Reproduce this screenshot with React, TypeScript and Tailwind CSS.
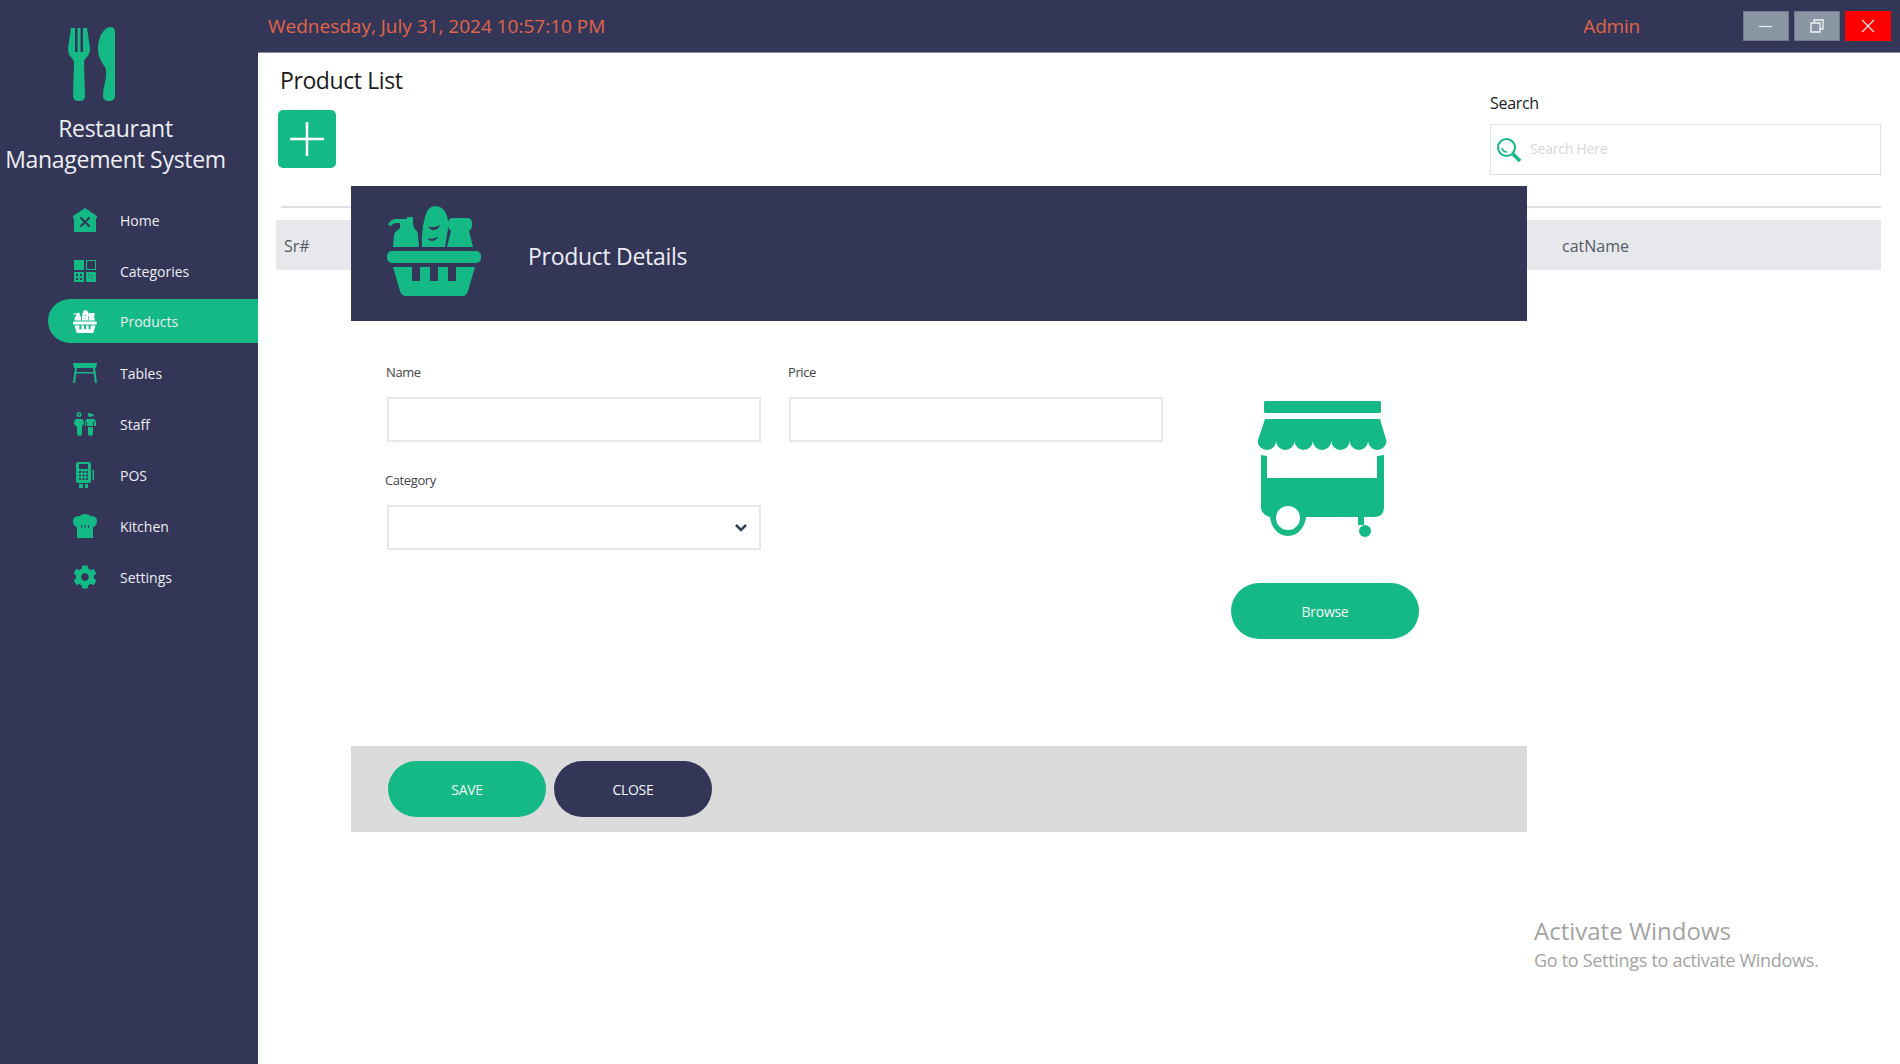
import { FaCog } from 'react-icons/fa'

const navy = '#343658'

function Logo() {
  return (
    <svg viewBox="0 0 48 74" className="w-[48px] h-[74px]" fill="#14b985">
      <path d="M3 1h4v24h2.500V1h3v24H15V1h4l3 20q0 7-4 10l-1.500 2q-.5 1-.5 3l1 33q0 5-5.500 5h-.5Q5 74 5 69l1-33q0-2-.7-3L3 30Q0 28 0 21z" />
      <path d="M42 0q5 0 5 5v64q0 5-6 5t-6-5q0-6 2-14 2-9 .5-14C33 34 30 30 30 21 30 9 37 0 42 0z" />
    </svg>
  )
}

function Basket({ className, cut = navy }: { className: string; cut?: string }) {
  return (
    <svg viewBox="0 0 94 90" className={className} fill="currentColor">
      <path d="M6 41l1-11q0-4 4-6l2-2v-5H9q-3 0-5 3l-3-1q2-6 8-6h11v-2h6v5q0 6 3 8 2 2 2 6l1 11z" />
      <path d="M35 41q-1-15 3-30 3-11 10-11 9 0 12 10 2 6 1 13l-3 18z" />
      <path d="M60 41l4-16q-3-2-3-5v-3q0-5 5-5h14q5 0 5 5v3q0 3-3 5l4 16z" />
      <path d="M41 20q4 3 12-1-2 5-7 5-3 0-5-4zM40 32q4 2 11-1-2 4-6 4-3 0-5-3z" fill={cut} />
      <rect x="0" y="45" width="94" height="12" rx="5" />
      <path
        fillRule="evenodd"
        d="M6 61h82l-7 24q-1.500 5-6 5H19q-4.500 0-6-5zM25 61v14h8V61zM43 61v14h8V61zM61 61v14h8V61z"
      />
    </svg>
  )
}

function Cart() {
  return (
    <svg viewBox="0 0 129 136" className="w-[129px] h-[136px]" fill="#14b985">
      <rect x="6" y="0" width="117" height="12" rx="1.500" />
      <path d="M7 18h115l6.500 22a9.200 9 0 0 1-18.400 0 9.200 9 0 0 1-18.400 0 9.200 9 0 0 1-18.400 0 9.200 9 0 0 1-18.400 0 9.200 9 0 0 1-18.400 0 9.200 9 0 0 1-18.400 0 9.200 9 0 0 1-18.400 0z" />
      <path d="M3 54l6 1v22h110V55l7-1v52q0 10-10 10h-10v8h-6v-8H48c-1 10-8 19-18 19s-17-9-18-19c-5-1-9-5-9-10z" />
      <circle cx="30" cy="117" r="12" fill="#fff" />
      <circle cx="107" cy="130" r="6" />
    </svg>
  )
}

function HomeIcon() {
  return (
    <svg viewBox="0 0 24 24" className="w-[24px] h-[24px]">
      <path d="M12 0l12 8v2h-1v14H1V10H0V8z" fill="#14b985" />
      <path d="M8 10l8 8M16 10l-8 8" stroke={navy} strokeWidth="2" strokeLinecap="round" />
    </svg>
  )
}

function GridIcon() {
  return (
    <svg viewBox="0 0 22 22" className="w-[22px] h-[22px]" fill="#14b985">
      <rect x="0" y="0" width="10" height="10" />
      <path fillRule="evenodd" d="M12 0h10v10H12zM13 1v8h8V1z" />
      <path fillRule="evenodd" d="M0 12h10v10H0zM2 14v2h2v-2zM6 14v2h2v-2zM2 18v2h2v-2zM6 18v2h2v-2z" />
      <path fillRule="evenodd" d="M12 12h10v10H12zM14 14v1h1v-1zM17 15v1h1v-1zM15 17v1h1v-1zM18 18v1h1v-1z" />
    </svg>
  )
}

function TableIcon() {
  return (
    <svg viewBox="0 0 24 20" className="w-[24px] h-[20px]" fill="#14b985">
      <path d="M0 0h24l-1 5H1z" />
      <path d="M2 5h2L2 20H0zM20 5h2l2 15h-2zM3 9h18v1.500H3z" />
    </svg>
  )
}

function StaffIcon() {
  return (
    <svg viewBox="0 0 22 24" className="w-[22px] h-[24px]" fill="#14b985">
      <path fillRule="evenodd" d="M5 0a2.500 2.500 0 1 1 0 5 2.500 2.500 0 0 1 0-5zM5 1.500a1 1 0 1 0 0 2 1 1 0 0 0 0-2z" />
      <path d="M2 7h6q2 1 2 5l-2 2v8q0 2-2.500 2T3 22v-7l-3-3q0-4 2-5z" />
      <path d="M14 1l5 1 1 2-5 1q-2-2-1-4zM13 7h7q2 1 2 4v3h-2v-4h-1v4h-6v-4h-1v4h-1v-3q0-3 2-4zM14 15h5v7q0 2-2.500 2T14 22z" />
    </svg>
  )
}

function PosIcon() {
  return (
    <svg viewBox="0 0 18 26" className="w-[18px] h-[26px]" fill="#14b985">
      <path fillRule="evenodd" d="M2 0h11q2 0 2 2v17q0 2-2 2H2q-2 0-2-2V2q0-2 2-2zM3 2v5h9V2zM3 9v2h2V9zM6.500 9v2h2V9zM10 9v2h2V9zM3 12.500v2h2v-2zM6.500 12.500v2h2v-2zM10 12.500v2h2v-2zM3 16v2h2v-2zM6.500 16v2h2v-2zM10 16v2h2v-2z" />
      <path d="M16.500 8H18v10h-1.500zM3 22h4v4H3zM9 22h3v4H9z" />
    </svg>
  )
}

function ChefIcon() {
  return (
    <svg viewBox="0 0 24 24" className="w-[24px] h-[24px]" fill="#14b985">
      <path d="M12 0q4 0 5 2 7 0 7 5 0 5-4 6v11H4V13Q0 12 0 7q0-5 7-5 1-2 5-2z" />
      <path d="M8 11h1v3H8zM11.500 11h1v3h-1zM15 11h1v3h-1z" fill={navy} />
    </svg>
  )
}

function SearchIcon() {
  return (
    <svg viewBox="0 0 26 26" className="w-[26px] h-[26px]" fill="none" stroke="#14b985">
      <circle cx="10.500" cy="10.500" r="8.500" strokeWidth="2" />
      <path d="M6 11q1 4 5 4" strokeWidth="1.500" />
      <path d="M17 17l7 7" strokeWidth="3.500" />
    </svg>
  )
}

const items = [
  { label: 'Home', icon: <HomeIcon /> },
  { label: 'Categories', icon: <GridIcon /> },
  { label: 'Products', icon: <Basket className="w-[24px] h-[23px] text-white" cut="#14b985" />, active: true },
  { label: 'Tables', icon: <TableIcon /> },
  { label: 'Staff', icon: <StaffIcon /> },
  { label: 'POS', icon: <PosIcon /> },
  { label: 'Kitchen', icon: <ChefIcon /> },
  { label: 'Settings', icon: <FaCog className="w-[24px] h-[24px] text-[#14b985]" /> },
]

export default function App() {
  return (
    <div className="relative flex w-[1900px] h-[1064px] overflow-hidden bg-white font-['Open_Sans',sans-serif]">
      <aside className="w-[258px] shrink-0 bg-[#343658] flex flex-col">
        <div className="pt-[27px] pl-[68px]">
          <Logo />
        </div>
        <div className="mt-[12px] text-center text-[23px] leading-[31px] tracking-[-0.3px] text-[#eceef2] pr-[27px]">
          Restaurant
          <br />
          Management System
        </div>
        <nav className="mt-[23px] flex flex-col gap-[7px]">
          {items.map((item) => (
            <div
              key={item.label}
              className={`ml-[48px] h-[44px] flex items-center rounded-l-[22px] ${item.active ? '-mt-px mb-px bg-[#14b985]' : ''}`}
            >
              <span className="ml-[23px] w-[28px] flex justify-center">{item.icon}</span>
              <span className="ml-[21px] text-[14px] text-[#eceef2]">{item.label}</span>
            </div>
          ))}
        </nav>
      </aside>

      <main className="flex-1 flex flex-col">
        <header className="h-[53px] shrink-0 bg-[#343658] border-b border-[#8a8ca3] flex items-center">
          <span className="ml-[10px] text-[19px] text-[#e0654a]">
            Wednesday, July 31, 2024 10:57:10 PM
          </span>
          <span className="ml-auto text-[19px] tracking-[-0.2px] text-[#e0654a]">Admin</span>
          <div className="ml-[103px] mr-[9px] -mt-[1px] flex gap-[5px]">
            <button className="w-[46px] h-[30px] bg-[#8a96a3] border border-[#6f7b8a] flex items-center justify-center">
              <svg viewBox="0 0 14 14" className="w-[14px] h-[14px]" stroke="#e9edf0" strokeWidth="1.200">
                <path d="M0 7.500h13" />
              </svg>
            </button>
            <button className="w-[46px] h-[30px] bg-[#8a96a3] border border-[#6f7b8a] flex items-center justify-center">
              <svg viewBox="0 0 14 14" className="w-[14px] h-[14px]" fill="none" stroke="#f2f4f6" strokeWidth="1.300">
                <path d="M1 4h9v9H1zM4 4V1h9v9h-3" />
              </svg>
            </button>
            <button className="w-[46px] h-[30px] bg-[#ff0000] flex items-center justify-center">
              <svg viewBox="0 0 14 14" className="w-[14px] h-[14px]" stroke="#fde8e8" strokeWidth="1.300">
                <path d="M1 1l12 12M13 1L1 13" />
              </svg>
            </button>
          </div>
        </header>

        <div className="flex justify-between pr-[19px]">
          <div>
            <h1 className="mt-[11px] ml-[22px] h-[32px] text-[23px] leading-[32px] tracking-[-0.4px] text-[#1a1a1a]">
              Product List
            </h1>
            <button className="mt-[14px] ml-[20px] w-[58px] h-[58px] rounded-[5px] bg-[#14b985] flex items-center justify-center">
              <svg viewBox="0 0 34 34" className="w-[34px] h-[34px]" stroke="#fff" strokeWidth="2.500">
                <path d="M17 0v34M0 17h34" />
              </svg>
            </button>
          </div>
          <div className="w-[391px] pt-[40px]">
            <div className="h-[20px] text-[16px] leading-[20px] tracking-[-0.3px] text-[#222]">Search</div>
            <div className="mt-[11px] h-[51px] border border-[#dde1e7] flex items-center">
              <span className="ml-[5px]">
                <SearchIcon />
              </span>
              <span className="ml-[8px] -mt-[2px] text-[14px] tracking-[-0.2px] text-[#d3d6dc]">Search Here</span>
            </div>
          </div>
        </div>

        <div className="mt-[31px] ml-[23px] mr-[19px] h-[2px] bg-[#dde1e7]" />
        <div className="mt-[12px] ml-[18px] mr-[19px] h-[50px] pt-[2px] bg-[#e7e8ec] flex items-center text-[16px] text-[#555a66]">
          <span className="ml-[8px] flex-1">Sr#</span>
          <span className="w-[319px]">catName</span>
        </div>
      </main>

      {/* product details dialog */}
      <div className="absolute left-[351px] top-[186px] w-[1176px] bg-white flex flex-col">
        <div className="h-[135px] bg-[#343658] flex items-center">
          <Basket className="ml-[36px] -mt-[6px] w-[94px] h-[90px] text-[#14b985]" />
          <span className="ml-[47px] mt-[6px] text-[23px] tracking-[-0.3px] text-[#eceef2]">Product Details</span>
        </div>
        <div className="h-[425px] flex">
          <div className="ml-[36px] grid grid-cols-[374px_374px] gap-x-[28px] content-start">
            <div>
              <div className="mt-[41px] -ml-px h-[20px] text-[13px] leading-[20px] tracking-[-0.4px] text-[#444]">Name</div>
              <div className="mt-[15px] h-[45px] border-2 border-[#e4e7eb]" />
            </div>
            <div>
              <div className="mt-[41px] -ml-px h-[20px] text-[13px] leading-[20px] tracking-[-0.4px] text-[#444]">Price</div>
              <div className="mt-[15px] h-[45px] border-2 border-[#e4e7eb]" />
            </div>
            <div>
              <div className="mt-[28px] -ml-[2px] h-[20px] text-[13px] leading-[20px] tracking-[-0.4px] text-[#444]">Category</div>
              <div className="mt-[15px] h-[45px] border-2 border-[#e4e7eb] flex items-center justify-end pr-[12px]">
                <svg viewBox="0 0 12 8" className="w-[12px] h-[8px]" fill="none" stroke="#343f58" strokeWidth="2.500">
                  <path d="M1 1l5 5 5-5" />
                </svg>
              </div>
            </div>
          </div>
          <div className="ml-[68px] w-[188px] flex flex-col">
            <div className="mt-[80px] ml-[27px]">
              <Cart />
            </div>
            <button className="mt-[46px] h-[56px] rounded-[28px] bg-[#14b985] text-[14px] tracking-[-0.3px] text-[#f2f6f5]">
              Browse
            </button>
          </div>
        </div>
        <div className="h-[86px] bg-[#dbdbdb] pl-[37px] flex items-center gap-[8px]">
          <button className="w-[158px] h-[56px] rounded-[28px] bg-[#14b985] text-[14px] tracking-[-0.3px] text-[#f2f6f5]">
            SAVE
          </button>
          <button className="w-[158px] h-[56px] rounded-[28px] bg-[#343658] text-[14px] tracking-[-0.3px] text-[#f2f6f5]">
            CLOSE
          </button>
        </div>
      </div>

      {/* windows watermark */}
      <div className="absolute left-[1534px] top-[915px] text-[#a3a3a3]">
        <div className="text-[24px] leading-[32px]">Activate Windows</div>
        <div className="text-[18px] leading-[26px] tracking-[-0.3px]">Go to Settings to activate Windows.</div>
      </div>
    </div>
  )
}
